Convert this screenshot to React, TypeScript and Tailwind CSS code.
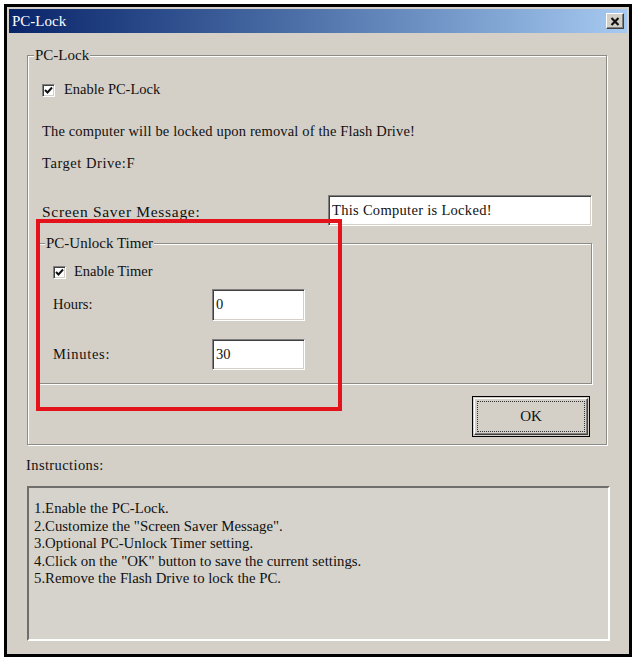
import React from 'react';

const serif = "font-['Liberation_Serif','Times_New_Roman',serif]";

// sunken 3D edge used by the edit boxes
const sunken =
  'border-t border-l border-t-[#808080] border-l-[#808080] border-b border-r border-b-white border-r-white shadow-[inset_1px_1px_0_#404040,inset_-1px_-1px_0_#d4d0c8]';

const CheckBox: React.FC = () => (
  <div className={`w-[13px] h-[13px] bg-white flex items-center justify-center ${sunken}`}>
    <svg width="9" height="9" viewBox="0 0 9 9">
      <path d="M1 4 L3.5 6.5 L8 1.5" stroke="#111" strokeWidth="2" fill="none" />
    </svg>
  </div>
);

const TextBox: React.FC<{ value: string; className?: string }> = ({ value, className }) => (
  <div className={`bg-white flex items-center pl-[3px] text-[14.5px] text-[#111] ${sunken} ${className ?? ''}`}>
    {value}
  </div>
);

const GroupBox: React.FC<{
  title: string;
  className?: string;
  legendClass?: string;
  children: React.ReactNode;
}> = ({ title, className, legendClass, children }) => (
  <fieldset
    className={`border border-[#8d8b86] shadow-[inset_1px_1px_0_#fff,1px_1px_0_#fff] ${className ?? ''}`}
  >
    <legend
      className={`px-[1px] h-[17px] leading-[17px] text-[15px] bg-[#d4d0c8] text-[#111] ${legendClass ?? ''}`}
    >
      {title}
    </legend>
    {children}
  </fieldset>
);

const steps = [
  '1.Enable the PC-Lock.',
  '2.Customize the "Screen Saver Message".',
  '3.Optional PC-Unlock Timer setting.',
  '4.Click on the "OK" button to save the current settings.',
  '5.Remove the Flash Drive to lock the PC.',
];

export default function App() {
  return (
    <div className={`w-[634px] h-[657px] bg-white pt-[4px] pl-[4px] overflow-hidden ${serif}`}>
      <div className="relative w-[628px] h-[653px] border-[3px] border-black bg-[#d4d0c8] text-[#111]">
        {/* title bar */}
        <div className="mx-[2px] mt-[2px] h-[24px] flex items-center justify-between pl-[3px] pr-[3px] bg-gradient-to-r from-[#0a246a] to-[#a6caf0]">
          <span className="text-white text-[15px] leading-none">PC-Lock</span>
          <div className="w-[18px] h-[16px] bg-[#d4d0c8] flex items-center justify-center border-t border-l border-t-white border-l-white border-b border-r border-b-[#404040] border-r-[#404040] shadow-[inset_-1px_-1px_0_#808080]">
            <svg width="10" height="9" viewBox="0 0 10 9">
              <path d="M1.5 1 L8.5 8 M8.5 1 L1.5 8" stroke="#111" strokeWidth="2.2" />
            </svg>
          </div>
        </div>

        {/* main group */}
        <GroupBox
          title="PC-Lock"
          legendClass="ml-[-3px]"
          className="mt-[14px] ml-[20px] w-[580px] pl-[9px] pr-[14px] pb-[7px]"
        >
          <div className="pl-[5px] mt-[16px] h-[20px] flex items-center gap-[9px] text-[14.5px]">
            <CheckBox />
            <span>Enable PC-Lock</span>
          </div>
          <div className="pl-[5px] mt-[22px] h-[20px] flex items-center text-[14.5px] tracking-[0.15px]">
            The computer will be locked upon removal of the Flash Drive!
          </div>
          <div className="pl-[5px] mt-[12px] h-[20px] flex items-center text-[14.5px] tracking-[0.55px]">
            Target Drive:F
          </div>
          <div className="mt-[21px] h-[31px] flex items-center justify-between">
            <span className="pl-[5px] pt-[2px] text-[15.5px] tracking-[0.7px]">Screen Saver Message:</span>
            <TextBox value="This Computer is Locked!" className="w-[264px] h-[31px] tracking-[0.3px]" />
          </div>

          <GroupBox
            title="PC-Unlock Timer"
            legendClass="ml-[-8px]"
            className="mt-[9px] pl-[15px] pb-[13px]"
          >
            <div className="mt-[10px] h-[20px] flex items-center gap-[8px] text-[14.5px]">
              <CheckBox />
              <span>Enable Timer</span>
            </div>
            <div className="mt-[7px] flex items-center text-[14.5px]">
              <span className="w-[159px]">Hours:</span>
              <TextBox value="0" className="w-[93px] h-[32px]" />
            </div>
            <div className="mt-[18px] flex items-center text-[14.5px]">
              <span className="w-[159px] tracking-[0.7px]">Minutes:</span>
              <TextBox value="30" className="w-[93px] h-[31px]" />
            </div>
          </GroupBox>

          <div className="mt-[12px] flex justify-end pr-[2px]">
            <button className="w-[118px] h-[41px] border border-black bg-[#d4d0c8] p-[1px]">
              <div className="w-full h-full border-t border-l border-t-white border-l-white border-b border-r border-b-[#404040] border-r-[#404040] shadow-[inset_-1px_-1px_0_#808080] p-[2px]">
                <div className="w-full h-full border border-dotted border-[#333] flex items-center justify-center text-[15px]">
                  OK
                </div>
              </div>
            </button>
          </div>
        </GroupBox>

        {/* instructions */}
        <div className="mt-[11px] ml-[19px] h-[20px] flex items-center text-[14.5px] tracking-[0.4px]">
          Instructions:
        </div>
        <div className="mt-[10px] ml-[20px] w-[583px] h-[155px] border-t-2 border-l-2 border-t-[#6f6e6a] border-l-[#6f6e6a] border-b-2 border-r-2 border-b-white border-r-white bg-[#d6d3cd] pt-[12px] pl-[5px]">
          {steps.map((s) => (
            <div key={s} className="h-[17.5px] leading-[17.5px] text-[14.8px] whitespace-pre">
              {s}
            </div>
          ))}
        </div>

        {/* red annotation frame */}
        <div className="absolute left-[29px] top-[212px] w-[306px] h-[192px] border-[4px] border-[#e3121b]" />
      </div>
    </div>
  );
}
